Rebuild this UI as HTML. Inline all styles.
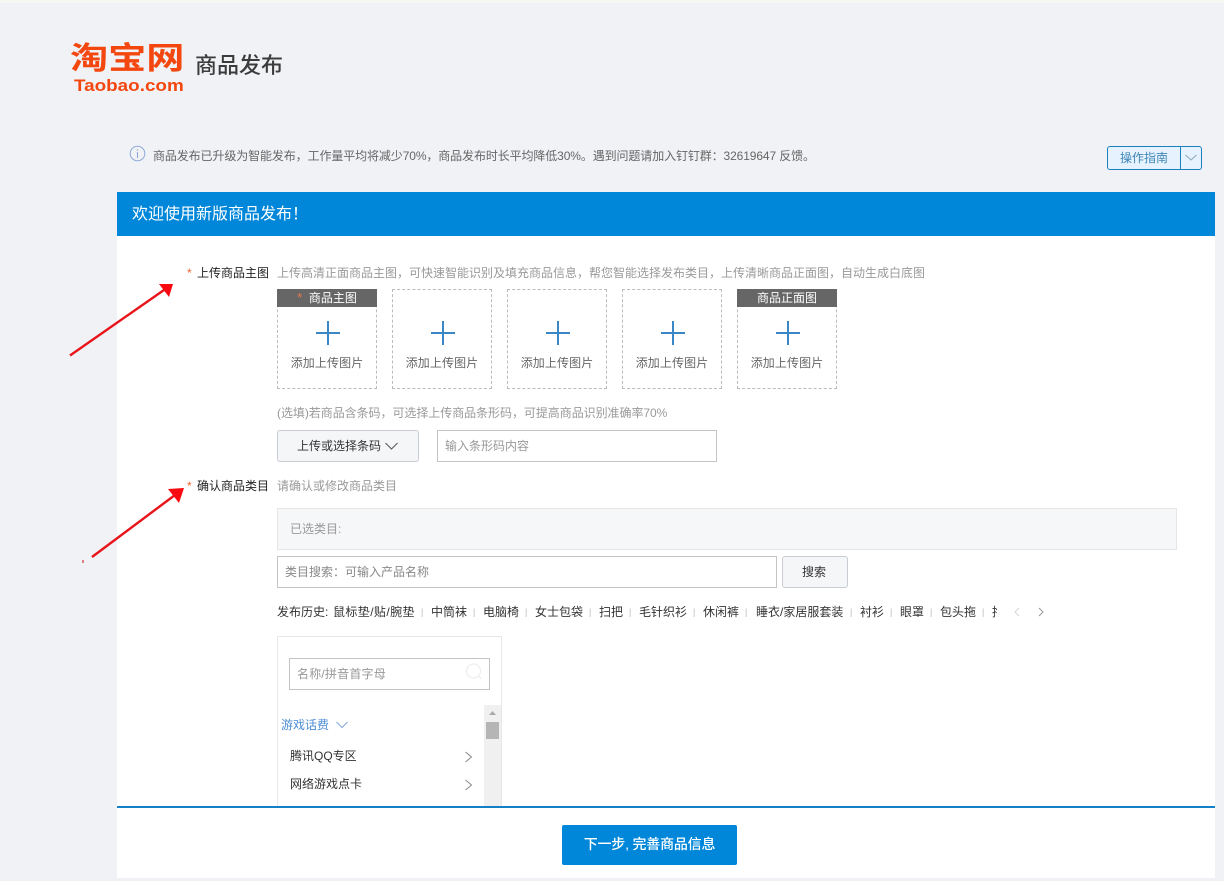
<!DOCTYPE html>
<html lang="zh-CN">
<head>
<meta charset="utf-8">
<title>商品发布</title>
<style>
html,body{margin:0;padding:0;}
body{width:1224px;height:881px;position:relative;overflow:hidden;background:#f0f2f6;font-family:"Liberation Sans","Noto Sans CJK SC",sans-serif;font-size:12px;color:#333;}
.a{position:absolute;white-space:nowrap;line-height:16px;}
.box{position:absolute;box-sizing:border-box;}
.up{position:absolute;top:289px;width:100px;height:100px;box-sizing:border-box;border:1px dashed #bbb;}
.up .h{position:absolute;left:-1px;top:-1px;width:100px;height:18px;background:#666;color:#fff;text-align:center;line-height:18px;font-size:12px;}
.up .h span{color:#e8794f;font-size:13px;}
.up .p1{position:absolute;left:38px;top:42px;width:24px;height:2px;background:#3b86c4;}
.up .p2{position:absolute;left:49px;top:31px;width:2px;height:24px;background:#3b86c4;}
.up .t{position:absolute;left:0;width:98px;top:65px;text-align:center;color:#666;line-height:16px;letter-spacing:.1px;}
.g{color:#999;}
.sep{color:#bbb;font-size:9px;}
</style>
</head>
<body>
<div class="box" style="left:0;top:0;width:1224px;height:3px;background:#f6f6f3;"></div>

<div class="a" style="left:70px;top:41px;font-size:31px;line-height:36px;font-weight:bold;color:#f4470f;transform-origin:0 50%;transform:scaleX(1.23);">淘宝网</div>
<div class="a" style="left:74px;top:76px;font-size:17px;line-height:20px;font-weight:bold;color:#f4470f;transform-origin:0 50%;transform:scaleX(1.11);">Taobao.com</div>
<div class="a" style="left:195px;top:53px;font-size:22px;line-height:26px;color:#3c3c3c;font-weight:500;">商品发布</div>

<svg class="box" style="left:129px;top:145px;" width="18" height="18" viewBox="0 0 18 18"><circle cx="8.500" cy="8.500" r="7.300" fill="none" stroke="#8fa9d8" stroke-width="1"/><path d="M8.500 7v6M8.500 4.200v1.400" stroke="#8fa9d8" stroke-width="1.100" fill="none"/></svg>
<div class="a" style="left:153px;top:148px;color:#666;letter-spacing:-.11px;">商品发布已升级为智能发布，工作量平均将减少70%，商品发布时长平均降低30%。遇到问题请加入钉钉群：32619647 反馈。</div>

<div class="box" style="left:1107px;top:146px;width:95px;height:24px;border:1px solid #1a80bf;border-radius:3px;background:#e6f2fd;"></div>
<div class="box" style="left:1180px;top:146px;width:1px;height:24px;background:#1a80bf;"></div>
<div class="a" style="left:1120px;top:150px;color:#3f86b8;">操作指南</div>
<svg class="box" style="left:1185px;top:154px;" width="12" height="7" viewBox="0 0 12 7"><path d="M.5 1L6 6l5.500-5" fill="none" stroke="#8aa5b8" stroke-width="1"/></svg>

<div class="box" style="left:117px;top:192px;width:1098px;height:686px;background:#fff;"></div>
<div class="box" style="left:117px;top:192px;width:1098px;height:44px;background:#0087d9;"></div>
<div class="a" style="left:132px;top:205px;font-size:16px;line-height:20px;color:#fff;">欢迎使用新版商品发布！</div>

<div class="a" style="left:187px;top:265px;color:#f4622d;">*</div>
<div class="a" style="left:197px;top:265px;color:#222;">上传商品主图</div>
<div class="a g" style="left:277px;top:265px;">上传高清正面商品主图，可快速智能识别及填充商品信息，帮您智能选择发布类目，上传清晰商品正面图，自动生成白底图</div>

<div class="up" style="left:277px;"><div class="h"><span>*</span>&nbsp; 商品主图</div><div class="p1"></div><div class="p2"></div><div class="t">添加上传图片</div></div>
<div class="up" style="left:392px;"><div class="p1"></div><div class="p2"></div><div class="t">添加上传图片</div></div>
<div class="up" style="left:507px;"><div class="p1"></div><div class="p2"></div><div class="t">添加上传图片</div></div>
<div class="up" style="left:622px;"><div class="p1"></div><div class="p2"></div><div class="t">添加上传图片</div></div>
<div class="up" style="left:737px;"><div class="h">商品正面图</div><div class="p1"></div><div class="p2"></div><div class="t">添加上传图片</div></div>

<div class="a g" style="left:277px;top:405px;letter-spacing:-.05px;">(选填)若商品含条码，可选择上传商品条形码，可提高商品识别准确率70%</div>

<div class="box" style="left:277px;top:430px;width:142px;height:32px;border:1px solid #c9ccd2;border-radius:3px;background:#f5f6f8;"></div>
<div class="a" style="left:297px;top:438px;color:#333;">上传或选择条码</div>
<svg class="box" style="left:385px;top:442px;" width="13" height="8" viewBox="0 0 13 8"><path d="M.5 1l6 6 6-6" fill="none" stroke="#555" stroke-width="1"/></svg>
<div class="box" style="left:437px;top:430px;width:280px;height:32px;border:1px solid #c4c4c4;background:#fff;"></div>
<div class="a g" style="left:445px;top:438px;">输入条形码内容</div>

<div class="a" style="left:187px;top:478px;color:#f4622d;">*</div>
<div class="a" style="left:197px;top:478px;color:#222;">确认商品类目</div>
<div class="a g" style="left:277px;top:478px;">请确认或修改商品类目</div>

<div class="box" style="left:277px;top:508px;width:900px;height:42px;border:1px solid #e6e6e6;background:#f6f7f8;"></div>
<div class="a g" style="left:290px;top:521px;">已选类目:</div>

<div class="box" style="left:277px;top:556px;width:500px;height:32px;border:1px solid #c4c4c4;background:#fff;"></div>
<div class="a" style="left:285px;top:564px;color:#888;">类目搜索：可输入产品名称</div>
<div class="box" style="left:782px;top:556px;width:66px;height:32px;border:1px solid #c9ccd2;border-radius:3px;background:#f5f6f8;"></div>
<div class="a" style="left:802px;top:564px;color:#333;">搜索</div>

<div class="a" style="left:277px;top:604px;color:#333;">发布历史:</div>
<div class="a" style="left:333px;top:604px;letter-spacing:.4px;">鼠标垫/贴/腕垫</div><div class="a sep" style="left:421px;top:604px;">|</div>
<div class="a" style="left:431px;top:604px;">中筒袜</div><div class="a sep" style="left:473px;top:604px;">|</div>
<div class="a" style="left:483px;top:604px;">电脑椅</div><div class="a sep" style="left:525px;top:604px;">|</div>
<div class="a" style="left:535px;top:604px;">女士包袋</div><div class="a sep" style="left:589px;top:604px;">|</div>
<div class="a" style="left:599px;top:604px;">扫把</div><div class="a sep" style="left:629px;top:604px;">|</div>
<div class="a" style="left:639px;top:604px;">毛针织衫</div><div class="a sep" style="left:693px;top:604px;">|</div>
<div class="a" style="left:703px;top:604px;">休闲裤</div><div class="a sep" style="left:745px;top:604px;">|</div>
<div class="a" style="left:756px;top:604px;">睡衣/家居服套装</div><div class="a sep" style="left:850px;top:604px;">|</div>
<div class="a" style="left:860px;top:604px;">衬衫</div><div class="a sep" style="left:890px;top:604px;">|</div>
<div class="a" style="left:900px;top:604px;">眼罩</div><div class="a sep" style="left:930px;top:604px;">|</div>
<div class="a" style="left:940px;top:604px;">包头拖</div><div class="a sep" style="left:982px;top:604px;">|</div>
<div class="a" style="left:992px;top:604px;width:5px;overflow:hidden;">拖</div>
<svg class="box" style="left:1013px;top:607px;" width="8" height="10" viewBox="0 0 8 10"><path d="M6 1L2 5l4 4" fill="none" stroke="#d5d5d5" stroke-width="1"/></svg>
<svg class="box" style="left:1037px;top:607px;" width="8" height="10" viewBox="0 0 8 10"><path d="M2 1l4 4-4 4" fill="none" stroke="#999" stroke-width="1"/></svg>

<div class="box" style="left:277px;top:636px;width:225px;height:172px;border:1px solid #e8e8e8;border-bottom:none;background:#fff;"></div>
<div class="box" style="left:289px;top:658px;width:201px;height:32px;border:1px solid #c4c4c4;background:#fff;"></div>
<div class="a g" style="left:297px;top:666px;letter-spacing:.2px;">名称/拼音首字母</div>
<svg class="box" style="left:464px;top:662px;" width="20" height="20" viewBox="0 0 20 20"><circle cx="9.500" cy="9" r="7" fill="none" stroke="#eee" stroke-width="1.200"/><path d="M14.500 14l3 3" stroke="#eee" stroke-width="1.200"/></svg>
<div class="a" style="left:281px;top:717px;color:#4c8dd6;">游戏话费</div>
<svg class="box" style="left:336px;top:721px;" width="12" height="8" viewBox="0 0 12 8"><path d="M.5 1L6 6.500 11.500 1" fill="none" stroke="#7fa6d8" stroke-width="1"/></svg>
<div class="a" style="left:290px;top:748px;color:#333;">腾讯QQ专区</div>
<svg class="box" style="left:464px;top:751px;" width="9" height="12" viewBox="0 0 9 12"><path d="M1.500 1l6 5-6 5" fill="none" stroke="#888" stroke-width="1"/></svg>
<div class="a" style="left:290px;top:776px;color:#333;">网络游戏点卡</div>
<svg class="box" style="left:464px;top:779px;" width="9" height="12" viewBox="0 0 9 12"><path d="M1.500 1l6 5-6 5" fill="none" stroke="#888" stroke-width="1"/></svg>
<div class="box" style="left:484px;top:705px;width:17px;height:103px;background:#f0f0f0;"></div>
<svg class="box" style="left:488px;top:710px;" width="9" height="6" viewBox="0 0 9 6"><path d="M4.500 1L8 5H1z" fill="#aaa"/></svg>
<div class="box" style="left:486px;top:722px;width:13px;height:17px;background:#b5b5b5;"></div>

<div class="box" style="left:117px;top:806px;width:1098px;height:2px;background:#1580c8;"></div>
<div class="box" style="left:562px;top:825px;width:175px;height:40px;border-radius:2px;background:#0087d9;"></div>
<div class="a" style="left:562px;top:836px;width:175px;text-align:center;font-size:14px;line-height:16px;font-weight:500;color:#fff;letter-spacing:-.2px;">下一步, 完善商品信息</div>
<div class="box" style="left:0;top:878px;width:1224px;height:3px;background:#f0f2f6;"></div>

<svg class="box" style="left:60px;top:270px;" width="130" height="300" viewBox="0 0 130 300">
<path d="M10 85.500L104 20" stroke="#e8141a" stroke-width="2.400" fill="none"/>
<path d="M99 14L113 14L109 27Z" fill="#f90a10"/>
<path d="M32 287L115 225" stroke="#e8141a" stroke-width="2.400" fill="none"/>
<path d="M108 219L124 218L119 233Z" fill="#f90a10"/>
<path d="M23 290v3" stroke="#d01018" stroke-width="1"/>
</svg>
</body>
</html>
